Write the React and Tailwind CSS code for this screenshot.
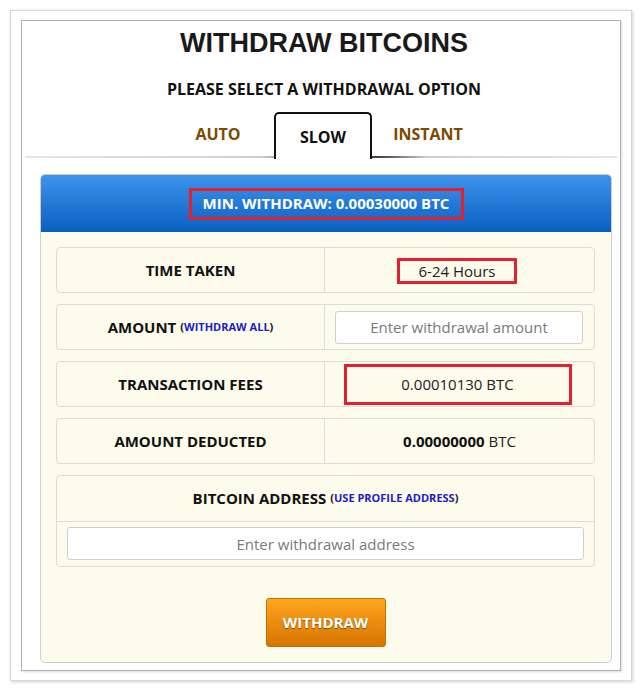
export default function App() {
  const row = "flex h-[46px] border border-[#dcdcdc] rounded-[4px]";
  const left = "w-[268px] shrink-0 border-r border-[#dcdcdc] flex items-center justify-center text-[15px] font-bold text-[#111] uppercase";
  const right = "flex-1 flex items-center justify-center text-[15px] text-[#222]";
  return (
    <div className="w-[642px] h-[690px] bg-white p-[10px] font-['Open_Sans',sans-serif]">
      <div className="w-[622px] h-[671px] border border-[#d6d6d6] shadow-[1px_1px_3px_rgba(0,0,0,0.18)] pl-[10px] pt-[9px]">
        <div className="w-[600px] h-[651px] border border-[#b0b0b0] shadow-[1px_1px_2px_rgba(0,0,0,0.15)] flex flex-col">
          <h1 className="mt-[7px] text-center font-['Liberation_Sans',Arial,sans-serif] font-bold text-[27px] leading-[30px] text-[#1a1a1a] pl-[6px]">
            WITHDRAW BITCOINS
          </h1>
          <div className="mt-[20px] text-center font-bold text-[16px] leading-[22px] text-[#111] pl-[6px]">
            PLEASE SELECT A WITHDRAWAL OPTION
          </div>
          <div className="relative mt-[12px] h-[46px] mx-[3px]">
            <div className="absolute left-0 right-0 bottom-0 h-[2px] bg-[linear-gradient(to_right,#e6e6e6,#cfcfcf_40%,#444_48%,#444_60%,#cfcfcf_68%,#e6e6e6)]"></div>
            <div className="relative flex justify-center gap-[7px] h-full pl-[4px]">
              <div className="w-[98px] flex justify-center pt-[10px] text-[16px] font-bold text-[#7b4a00]">AUTO</div>
              <div className="w-[98px] flex justify-center pt-[11px] text-[16px] font-bold text-[#111] bg-white border-2 border-b-0 border-[#111] rounded-t-[5px] h-[47px]">SLOW</div>
              <div className="w-[98px] flex justify-center pt-[10px] text-[16px] font-bold text-[#7b4a00]">INSTANT</div>
            </div>
          </div>
          <div className="mt-[16px] ml-[18px] w-[572px] border border-[#cdcdcd] rounded-[5px] overflow-hidden bg-[#fdfbec]">
            <div className="h-[57px] bg-[linear-gradient(to_bottom,#3e93ec,#0a5fc2)] flex items-center justify-center">
              <div className="w-[275px] h-[32px] border-[3px] border-[#e3202c] flex items-center justify-center text-white font-bold text-[15px]">
                MIN. WITHDRAW: 0.00030000 BTC
              </div>
            </div>
            <div className="pl-[15px] pr-[16px] pt-[15px] pb-[15px] flex flex-col gap-[11px]">
              <div className={row}>
                <div className={left}>TIME TAKEN</div>
                <div className={right}>
                  <div className="w-[120px] h-[26px] border-[3px] border-[#e3202c] flex items-center justify-center mt-[2px] mr-[5px]">6-24 Hours</div>
                </div>
              </div>
              <div className={row}>
                <div className={left}>
                  AMOUNT<span className="ml-[4px] text-[11px] font-bold text-[#111]">(<span className="text-[#1c1cc8]">WITHDRAW ALL</span>)</span>
                </div>
                <div className="flex-1 flex items-center pl-[10px] pr-[11px]">
                  <input className="w-full h-[33px] bg-white border border-[#cfcfcf] rounded-[3px] text-center text-[15px] text-[#333] placeholder:text-[#7a7a7a] outline-none" placeholder="Enter withdrawal amount" />
                </div>
              </div>
              <div className={row}>
                <div className={left}>TRANSACTION FEES</div>
                <div className={right}>
                  <div className="w-[228px] h-[41px] border-[3px] border-[#e3202c] flex items-center justify-center mr-[4px]">0.00010130 BTC</div>
                </div>
              </div>
              <div className={row}>
                <div className={left}>AMOUNT DEDUCTED</div>
                <div className={right}><span className="font-bold text-[#111]">0.00000000</span>&nbsp;BTC</div>
              </div>
              <div className="border border-[#dcdcdc] rounded-[4px] h-[92px] flex flex-col">
                <div className="h-[46px] border-b border-[#dcdcdc] flex items-center justify-center text-[15px] font-bold text-[#111]">
                  BITCOIN ADDRESS<span className="ml-[4px] text-[11px] font-bold">(<span className="text-[#1c1cc8]">USE PROFILE ADDRESS</span>)</span>
                </div>
                <div className="px-[10px] pt-[5px]">
                  <input className="w-full h-[33px] bg-white border border-[#cfcfcf] rounded-[3px] text-center text-[15px] text-[#333] placeholder:text-[#7a7a7a] outline-none" placeholder="Enter withdrawal address" />
                </div>
              </div>
              <div className="flex justify-center mt-[20px]">
                <button className="w-[120px] h-[49px] rounded-[3px] border border-[#c47000] bg-[linear-gradient(to_bottom,#ffa620,#d67500)] text-white font-bold text-[15px] [text-shadow:0_1px_1px_rgba(0,0,0,0.45)]">
                  WITHDRAW
                </button>
              </div>
            </div>
          </div>
        </div>
      </div>
    </div>
  );
}
